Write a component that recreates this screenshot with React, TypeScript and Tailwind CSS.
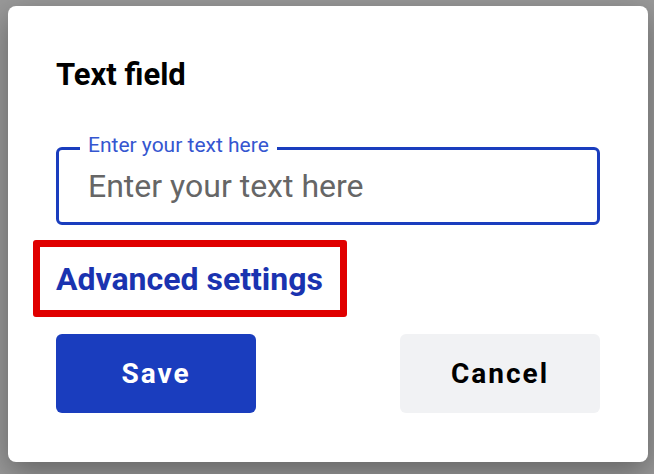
const App = () => {
  return (
    <div className="h-[474px] w-[654px] bg-[#999] pt-[6px] pl-[8px] font-['Roboto',sans-serif]">
      <div className="flex h-[456px] w-[640px] flex-col rounded-[8px] bg-white px-12 pt-[49px] shadow-[0_10px_30px_rgba(0,0,0,0.35)]">
        <h2 className="text-[31px] font-bold leading-[40px] text-black">Text field</h2>

        <div className="relative mt-[52px] flex h-[78px] items-center rounded-[6px] border-[3px] border-[#1a3dbe] px-[29px]">
          <span className="absolute -top-[18px] left-[21px] bg-white px-[8px] text-[21px] leading-[26px] text-[#3556d0]">
            Enter your text here
          </span>
          <input
            className="w-full bg-transparent text-[32px] text-[#666] outline-none placeholder:text-[#666]"
            placeholder="Enter your text here"
          />
        </div>

        <div className="-ml-[23px] mt-[15px] flex h-[77px] w-[314px] items-center rounded-[3px] border-[7px] border-[#e00000] pl-[16px]">
          <a className="text-[32px] font-bold text-[#1a33b0]" href="#">
            Advanced settings
          </a>
        </div>

        <div className="mt-[17px] flex justify-between">
          <button className="h-[79px] w-[200px] rounded-[6px] bg-[#1a3dbe] text-[28px] font-bold tracking-[2px] text-white">
            Save
          </button>
          <button className="h-[79px] w-[200px] rounded-[6px] bg-[#f1f2f4] text-[28px] font-bold tracking-[2px] text-black">
            Cancel
          </button>
        </div>
      </div>
    </div>
  );
};

export default App;
